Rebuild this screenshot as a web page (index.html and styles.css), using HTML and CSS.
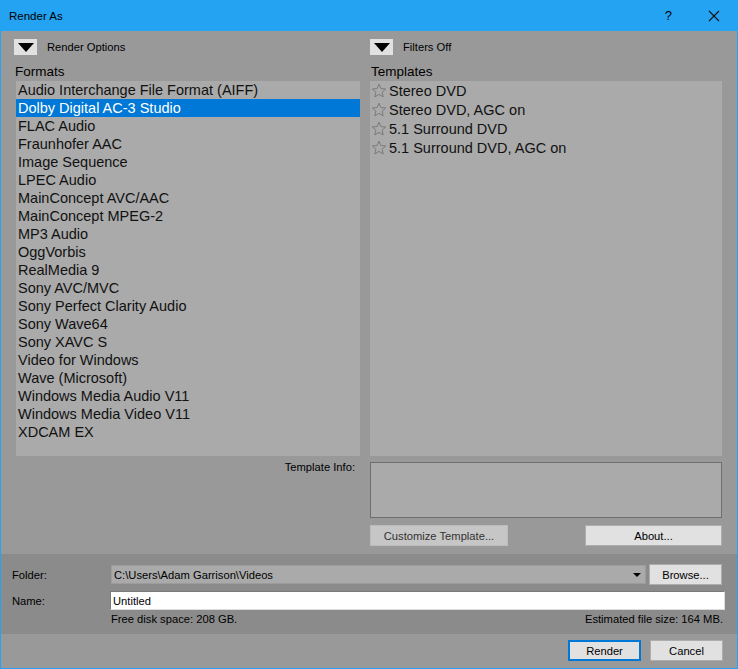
FILE: index.html
```html
<!DOCTYPE html>
<html>
    <head>
        <meta charset="utf-8">
        <title>Render As</title>
        <link rel="stylesheet" href="styles.css">
    </head>
    <body>
        <div class='window'>
            <div class='titlebar'>
                <span class='title'>Render As</span>
                <span class='tb-help'>?</span>
                <span class='tb-close'>
                    <svg width='12' height='12' viewBox='0 0 12 12'><path d='M1 1 L11 11 M11 1 L1 11' stroke='#111' stroke-width='1.1' fill='none'/></svg>
                </span>
            </div>

            <div class='main'>
                <div class='col'>
                    <div class='toggle-row'>
                        <span class='toggle'><span class='tri'></span></span>
                        <span class='toggle-label'>Render Options</span>
                    </div>
                    <div class='list-label'>Formats</div>
                    <div class='list formats'>
                        <div class='item'>Audio Interchange File Format (AIFF)</div>
                        <div class='item sel'>Dolby Digital AC-3 Studio</div>
                        <div class='item'>FLAC Audio</div>
                        <div class='item'>Fraunhofer AAC</div>
                        <div class='item'>Image Sequence</div>
                        <div class='item'>LPEC Audio</div>
                        <div class='item'>MainConcept AVC/AAC</div>
                        <div class='item'>MainConcept MPEG-2</div>
                        <div class='item'>MP3 Audio</div>
                        <div class='item'>OggVorbis</div>
                        <div class='item'>RealMedia 9</div>
                        <div class='item'>Sony AVC/MVC</div>
                        <div class='item'>Sony Perfect Clarity Audio</div>
                        <div class='item'>Sony Wave64</div>
                        <div class='item'>Sony XAVC S</div>
                        <div class='item'>Video for Windows</div>
                        <div class='item'>Wave (Microsoft)</div>
                        <div class='item'>Windows Media Audio V11</div>
                        <div class='item'>Windows Media Video V11</div>
                        <div class='item'>XDCAM EX</div>
                    </div>
                    <div class='info-label'>Template Info:</div>
                </div>

                <div class='col'>
                    <div class='toggle-row'>
                        <span class='toggle'><span class='tri'></span></span>
                        <span class='toggle-label'>Filters Off</span>
                    </div>
                    <div class='list-label'>Templates</div>
                    <div class='list templates'>
                        <div class='titem'><svg class='star' width='16' height='16' viewBox='0 0 16 16'><path d='M8 1.2 L9.9 5.6 L14.7 6 L11.1 9.2 L12.2 13.9 L8 11.4 L3.8 13.9 L4.9 9.2 L1.3 6 L6.1 5.6 Z' fill='none' stroke='#7a7a7a' stroke-width='1'/></svg>Stereo DVD</div>
                        <div class='titem'><svg class='star' width='16' height='16' viewBox='0 0 16 16'><path d='M8 1.2 L9.9 5.6 L14.7 6 L11.1 9.2 L12.2 13.9 L8 11.4 L3.8 13.9 L4.9 9.2 L1.3 6 L6.1 5.6 Z' fill='none' stroke='#7a7a7a' stroke-width='1'/></svg>Stereo DVD, AGC on</div>
                        <div class='titem'><svg class='star' width='16' height='16' viewBox='0 0 16 16'><path d='M8 1.2 L9.9 5.6 L14.7 6 L11.1 9.2 L12.2 13.9 L8 11.4 L3.8 13.9 L4.9 9.2 L1.3 6 L6.1 5.6 Z' fill='none' stroke='#7a7a7a' stroke-width='1'/></svg>5.1 Surround DVD</div>
                        <div class='titem'><svg class='star' width='16' height='16' viewBox='0 0 16 16'><path d='M8 1.2 L9.9 5.6 L14.7 6 L11.1 9.2 L12.2 13.9 L8 11.4 L3.8 13.9 L4.9 9.2 L1.3 6 L6.1 5.6 Z' fill='none' stroke='#7a7a7a' stroke-width='1'/></svg>5.1 Surround DVD, AGC on</div>
                    </div>
                    <div class='info-box'></div>
                    <div class='tpl-buttons'>
                        <span class='btn btn-off customize'>Customize Template...</span>
                        <span class='btn about'>About...</span>
                    </div>
                </div>
            </div>

            <div class='files'>
                <div class='frow'>
                    <span class='flabel'>Folder:</span>
                    <span class='combo'>
                        <span class='combo-val'>C:\Users\Adam Garrison\Videos</span>
                        <span class='combo-arrow'></span>
                    </span>
                    <span class='btn browse'>Browse...</span>
                </div>
                <div class='frow'>
                    <span class='flabel'>Name:</span>
                    <span class='name-input'>Untitled</span>
                </div>
                <div class='space-row'>
                    <span>Free disk space: 208 GB.</span>
                    <span>Estimated file size: 164 MB.</span>
                </div>
            </div>

            <div class='footer'>
                <span class='btn render'>Render</span>
                <span class='btn cancel'>Cancel</span>
            </div>
        </div>
    </body>
</html>
```

FILE: styles.css
```css
html {
    box-sizing: border-box;
}
*, *:before, *:after {
    box-sizing: inherit;
}

body {
    margin: 0;
    font-family: "Liberation Sans", Arial, sans-serif;
    font-size: 11.2px;
    color: #000;
    background-color: #999;
}

.window {
    width: 738px;
    height: 669px;
    background-color: #999;
    border: 1px solid #24a3f2;
    border-top: none;
    display: flex;
    flex-direction: column;
}

.titlebar {
    height: 31px;
    background-color: #24a3f2;
    display: flex;
    align-items: center;
    margin: 0 -1px;
    padding-left: 9px;
}

.title {
    flex: 1;
    font-size: 11.5px;
}

.tb-help {
    font-size: 13px;
    margin-right: 36px;
}

.tb-close {
    display: flex;
    margin-right: 18px;
}

.main {
    display: grid;
    grid-template-columns: 346px 352px;
    column-gap: 10px;
    padding: 8px 0 0 13px;
}

.col {
    display: flex;
    flex-direction: column;
}

.toggle-row {
    display: flex;
    align-items: center;
    height: 16px;
}

.toggle {
    width: 23px;
    height: 16px;
    background-color: #e1e1e1;
    display: flex;
    align-items: center;
    justify-content: center;
    margin-right: 10px;
}

.tri {
    width: 0;
    height: 0;
    border-left: 8px solid transparent;
    border-right: 8px solid transparent;
    border-top: 9px solid #000;
}

.list-label {
    font-size: 13.5px;
    height: 26px;
    padding-top: 9px;
    padding-left: 1px;
}

.list {
    height: 375px;
    background-color: #aaa;
    font-size: 14.5px;
}

.formats {
    margin-left: 2px;
}

.item {
    height: 18px;
    line-height: 17px;
    padding: 1px 0 0 2px;
    white-space: nowrap;
    color: #111;
}

.item.sel {
    background-color: #0078d7;
    color: #fff;
}

.titem {
    height: 19px;
    padding-top: 1px;
    display: flex;
    align-items: center;
    color: #111;
    white-space: nowrap;
}

.star {
    margin: 0 2px 0 1px;
}

.info-label {
    text-align: right;
    padding-right: 5px;
    margin-top: 5px;
}

.info-box {
    margin-top: 6px;
    height: 56px;
    background-color: #aaa;
    border: 1px solid #6e6e6e;
}

.tpl-buttons {
    display: flex;
    justify-content: space-between;
    margin-top: 7px;
}

.btn {
    display: inline-flex;
    align-items: center;
    justify-content: center;
    height: 21px;
    background-color: #e1e1e1;
    border: 1px solid #adadad;
}

.btn-off {
    background-color: #c6c6c6;
    border-color: #bcbcbc;
    color: #333;
}

.customize {
    width: 138px;
}

.about {
    width: 137px;
}

.files {
    margin-top: 8px;
    height: 80px;
    background-color: #8b8b8b;
    padding: 10px 12px 0 11px;
}

.frow {
    display: flex;
    align-items: center;
    height: 21px;
    margin-bottom: 5px;
}

.flabel {
    width: 99px;
}

.combo {
    width: 535px;
    height: 19px;
    background-color: #aaa;
    border: 1px solid #9c9c9c;
    display: flex;
    align-items: center;
    padding-left: 2px;
    margin-right: 3px;
}

.combo-val {
    flex: 1;
}

.combo-arrow {
    width: 0;
    height: 0;
    border-left: 4px solid transparent;
    border-right: 4px solid transparent;
    border-top: 4px solid #000;
    margin-right: 4px;
}

.browse {
    width: 73px;
}

.name-input {
    width: 615px;
    height: 19px;
    background-color: #fff;
    border: 1px solid #7a7a7a;
    border-right-color: #ddd;
    border-bottom-color: #ddd;
    padding-left: 2px;
    display: flex;
    align-items: center;
    margin-left: -1px;
}

.space-row {
    display: flex;
    justify-content: space-between;
    padding-left: 99px;
    margin-top: -3px;
    padding-right: 2px;
}

.footer {
    display: flex;
    justify-content: flex-end;
    align-items: center;
    gap: 9px;
    padding: 6px 14px 0 0;
}

.render {
    width: 73px;
    border: 2px solid #0078d7;
}

.cancel {
    width: 73px;
}
```
